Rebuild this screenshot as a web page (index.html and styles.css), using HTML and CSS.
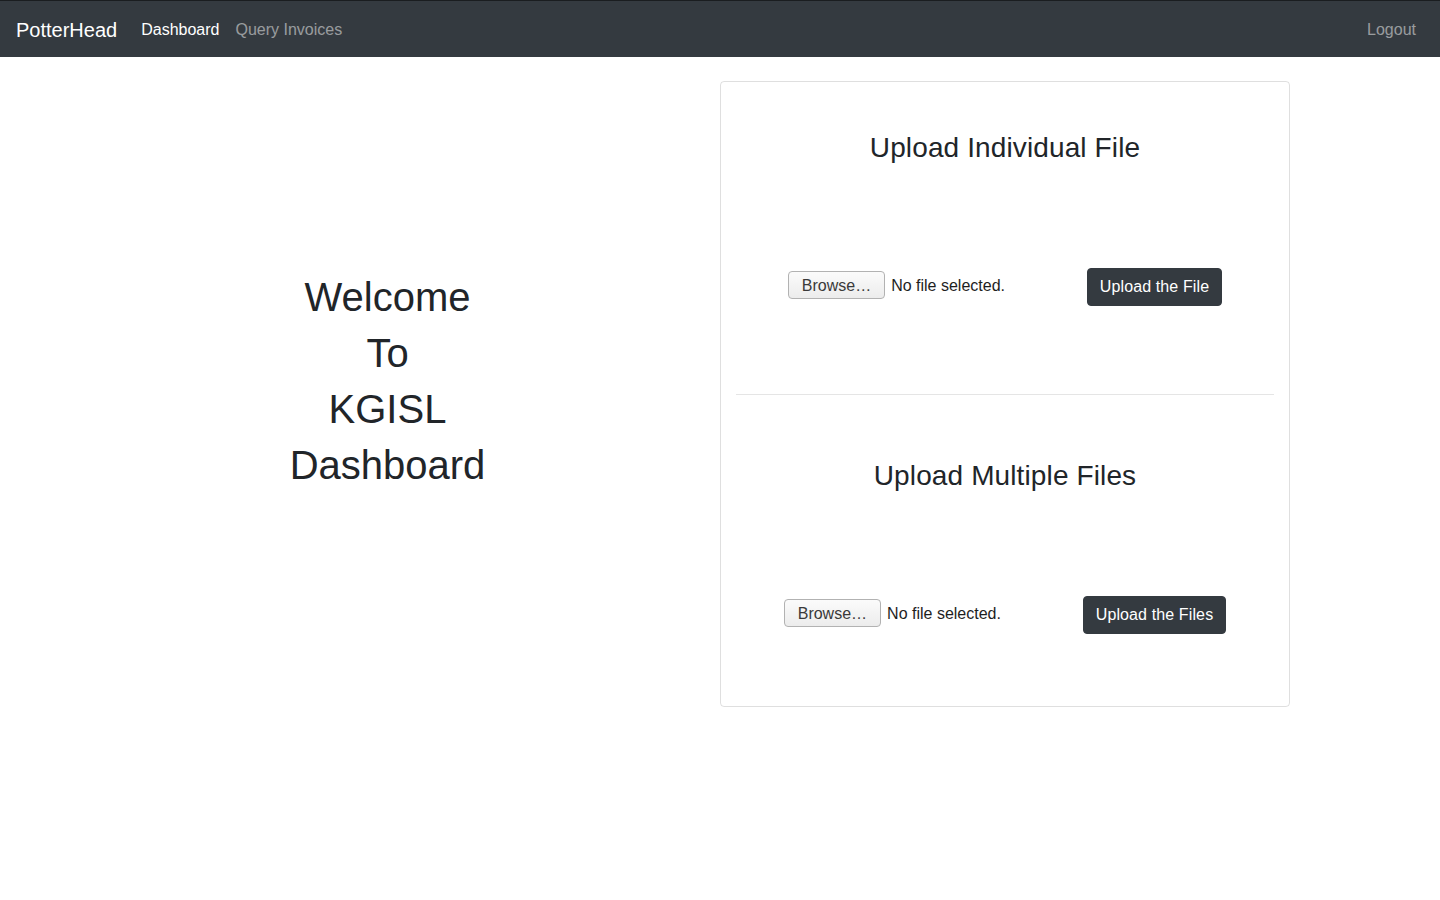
FILE: index.html
```html
<!DOCTYPE html>
<html lang="en">
<head>
<meta charset="utf-8">
<title>PotterHead</title>
<link rel="stylesheet" href="styles.css">
</head>
<body>
<nav class="navbar">
  <a class="brand" href="#">PotterHead</a>
  <ul class="nav-links">
    <li><a class="nav-link active" href="#">Dashboard</a></li>
    <li><a class="nav-link" href="#">Query Invoices</a></li>
  </ul>
  <a class="nav-link logout" href="#">Logout</a>
</nav>

<main class="container">
  <section class="welcome">
    <h1>Welcome</h1>
    <h1>To</h1>
    <h1>KGISL</h1>
    <h1>Dashboard</h1>
  </section>

  <section class="card">
    <div class="upload upload-first">
      <h3>Upload Individual File</h3>
      <div class="upload-row">
        <div class="file-input">
          <span class="browse">Browse…</span>
          <span class="file-status">No file selected.</span>
        </div>
        <button class="btn-dark">Upload the File</button>
      </div>
    </div>
    <hr class="divider">
    <div class="upload upload-second">
      <h3>Upload Multiple Files</h3>
      <div class="upload-row">
        <div class="file-input">
          <span class="browse">Browse…</span>
          <span class="file-status">No file selected.</span>
        </div>
        <button class="btn-dark">Upload the Files</button>
      </div>
    </div>
  </section>
</main>
</body>
</html>
```

FILE: styles.css
```css
* { box-sizing: border-box; }

html, body {
  margin: 0;
  padding: 0;
  background: #fff;
  color: #212529;
  font-family: "Liberation Sans", Arial, sans-serif;
  font-size: 16px;
  line-height: 1.5;
}

a { text-decoration: none; }

.navbar {
  display: flex;
  align-items: center;
  height: 57px;
  padding: 9px 16px 7px;
  background: #343a40;
  border-top: 1px solid #1a1d20;
}

.brand {
  color: #fff;
  font-size: 20px;
  line-height: 30px;
  padding: 5px 0;
  margin-right: 16px;
}

.nav-links {
  display: flex;
  list-style: none;
  margin: 0;
  padding: 0;
  flex: 1;
}

.nav-link {
  display: block;
  padding: 8px 8px;
  line-height: 24px;
  color: rgba(255, 255, 255, 0.5);
}

.nav-link.active { color: #fff; }

.container {
  width: 1140px;
  margin: 24px auto 0;
  display: grid;
  grid-template-columns: 475px 95px 570px;
  align-items: start;
}

.welcome {
  grid-column: 1;
  text-align: center;
  padding-top: 192px;
}

.welcome h1 {
  margin: 0 0 8px;
  font-size: 40px;
  font-weight: 400;
  line-height: 48px;
}

.card {
  grid-column: 3;
  border: 1px solid rgba(0, 0, 0, 0.125);
  border-radius: 4px;
  padding: 0 15px;
}

.upload {
  display: flex;
  flex-direction: column;
  align-items: center;
}

.upload-first { padding: 49px 0 72px; }
.upload-second { padding: 48px 0 72px; }

.upload h3 {
  margin: 0;
  font-size: 28px;
  font-weight: 400;
  line-height: 34px;
  letter-spacing: 0.12px;
}

.upload-row {
  display: flex;
  align-items: flex-start;
  margin-top: 103px;
  height: 38px;
}

.file-input {
  display: flex;
  align-items: center;
  width: 295px;
  margin-top: 3px;
  margin-right: 4px;
}

.browse {
  display: inline-flex;
  align-items: center;
  height: 28px;
  padding: 2px 13px 0;
  border: 1px solid #b2b2b2;
  border-radius: 4px;
  background: linear-gradient(#fbfbfb, #ececec);
  color: #3a3a3a;
  font-size: 16px;
  margin-right: 6px;
}

.file-status {
  color: #1e1e1e;
  font-size: 16px;
  padding-top: 2px;
}

.btn-dark {
  height: 38px;
  padding: 6px 12px;
  border: 1px solid #343a40;
  border-radius: 4px;
  background: #343a40;
  color: #fff;
  font-family: inherit;
  font-size: 16px;
  line-height: 24px;
  letter-spacing: 0.12px;
}

.divider {
  margin: 16px 0;
  border: 0;
  border-top: 1px solid rgba(0, 0, 0, 0.1);
}
```
